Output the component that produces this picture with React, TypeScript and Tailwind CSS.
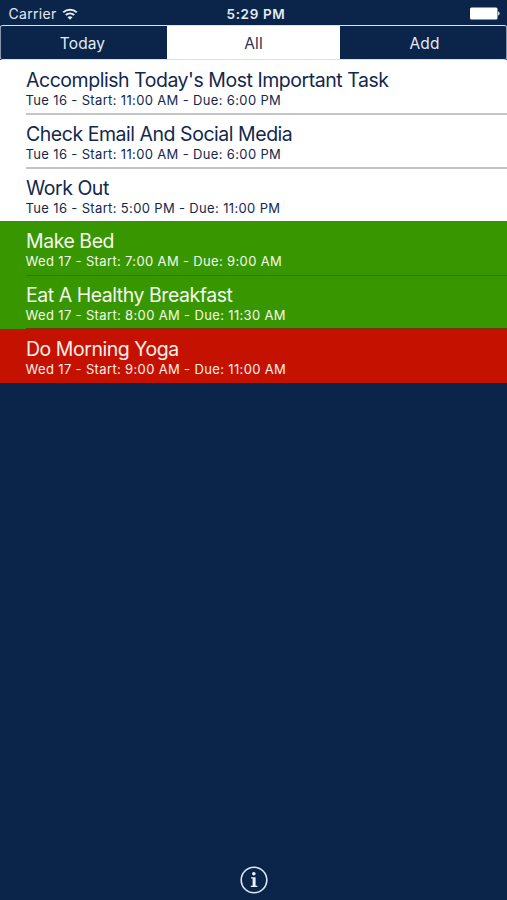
type Tone = 'plain' | 'done' | 'late';

interface Task {
  title: string;
  detail: string;
  tone: Tone;
  line: string;
}

const tasks: Task[] = [
  { title: "Accomplish Today's Most Important Task", detail: 'Tue 16 - Start: 11:00 AM - Due: 6:00 PM', tone: 'plain', line: 'bg-[#c4c5c7]' },
  { title: 'Check Email And Social Media', detail: 'Tue 16 - Start: 11:00 AM - Due: 6:00 PM', tone: 'plain', line: 'bg-[#c4c5c7]' },
  { title: 'Work Out', detail: 'Tue 16 - Start: 5:00 PM - Due: 11:00 PM', tone: 'plain', line: 'bg-[#3f8a1c]' },
  { title: 'Make Bed', detail: 'Wed 17 - Start: 7:00 AM - Due: 9:00 AM', tone: 'done', line: 'bg-[#2c7a08]' },
  { title: 'Eat A Healthy Breakfast', detail: 'Wed 17 - Start: 8:00 AM - Due: 11:30 AM', tone: 'done', line: 'bg-[#6b3a08]' },
  { title: 'Do Morning Yoga', detail: 'Wed 17 - Start: 9:00 AM - Due: 11:00 AM', tone: 'late', line: 'bg-transparent' },
];

const rowTone: Record<Tone, string> = {
  plain: 'bg-white text-[#12284d]',
  done: 'bg-[#389600] text-[#f4faef]',
  late: 'bg-[#c51200] text-[#fdeeee]',
};

function StatusBar() {
  return (
    <header className="grid h-[25px] shrink-0 grid-cols-3 items-center px-2 text-[#e3eaf4]">
      <div className="flex items-center gap-[5px] pt-[3px] pl-[0.5px]">
        <span className="text-[14px] leading-5 tracking-[0.3px]">Carrier</span>
        <svg width="16" height="12" viewBox="0 0 16 12" fill="none" stroke="currentColor" strokeWidth="2">
          <path d="M1.2 4.4C5 .7 11 .7 14.8 4.4M3.8 7.1c2.4-2.2 6-2.2 8.4 0" />
          <path d="M8 11.8 5.5 9.2c1.4-1.2 3.6-1.2 5 0z" fill="currentColor" stroke="none" />
        </svg>
      </div>
      <div className="pt-[3px] pl-[5px] text-center text-[13.5px] leading-5 font-semibold tracking-[0.65px] whitespace-nowrap">5:29 PM</div>
      <div className="-mr-px flex justify-end pt-[2px]">
        <svg width="31" height="13" viewBox="0 0 31 13" fill="white">
          <rect x="1" y="0.5" width="27.5" height="12" rx="1.5" />
          <path d="M29.2 4.5c1.8.5 1.8 3.5 0 4z" />
        </svg>
      </div>
    </header>
  );
}

function Tabs() {
  return (
    <nav className="flex h-[35px] shrink-0 rounded-[3px] border-y border-[#d7e2f0] text-[15.5px] leading-[35px] tracking-[0.1px] text-[#e3eaf4]">
      <div className="w-[167px] border-l border-[#d7e2f0]/60 pr-[3px] text-center">Today</div>
      <div className="w-[173px] bg-white text-center text-[#273556]">All</div>
      <div className="flex-1 border-r border-[#d7e2f0]/60 pl-[3px] text-center">Add</div>
    </nav>
  );
}

export default function App() {
  return (
    <main className="flex h-[900px] w-[507px] flex-col overflow-hidden bg-[#0a2549] font-['Inter','Liberation_Sans',sans-serif]">
      <StatusBar />
      <Tabs />
      <ul className="shrink-0">
        {tasks.map((task) => (
          <li key={task.title} className={`flex h-[53.8px] flex-col pl-[26px] ${rowTone[task.tone]}`}>
            <div className="mt-[9px] h-[23px] text-[19.5px] leading-[23px] tracking-[-0.465px] whitespace-nowrap">{task.title}</div>
            <div className="-ml-[0.5px] h-[16px] text-[13px] leading-[16px] tracking-[0.35px] whitespace-nowrap">{task.detail}</div>
            <div className={`relative z-10 mt-auto -mb-px h-[1.5px] shrink-0 ${task.line}`} />
          </li>
        ))}
      </ul>
      <footer className="mt-auto flex justify-center pb-[5px]">
        <svg width="30" height="30" viewBox="0 0 30 30" fill="none" stroke="#dce8f3">
          <circle cx="15" cy="15" r="12.8" strokeWidth="1.6" />
          <circle cx="14.8" cy="8.8" r="1.8" fill="#e8f2fa" stroke="none" />
          <path d="M12 12.2h4.6v8.5h1.8v1.4h-6.6v-1.4h1.8v-7.1H12z" fill="#e8f2fa" stroke="none" />
        </svg>
      </footer>
    </main>
  );
}
